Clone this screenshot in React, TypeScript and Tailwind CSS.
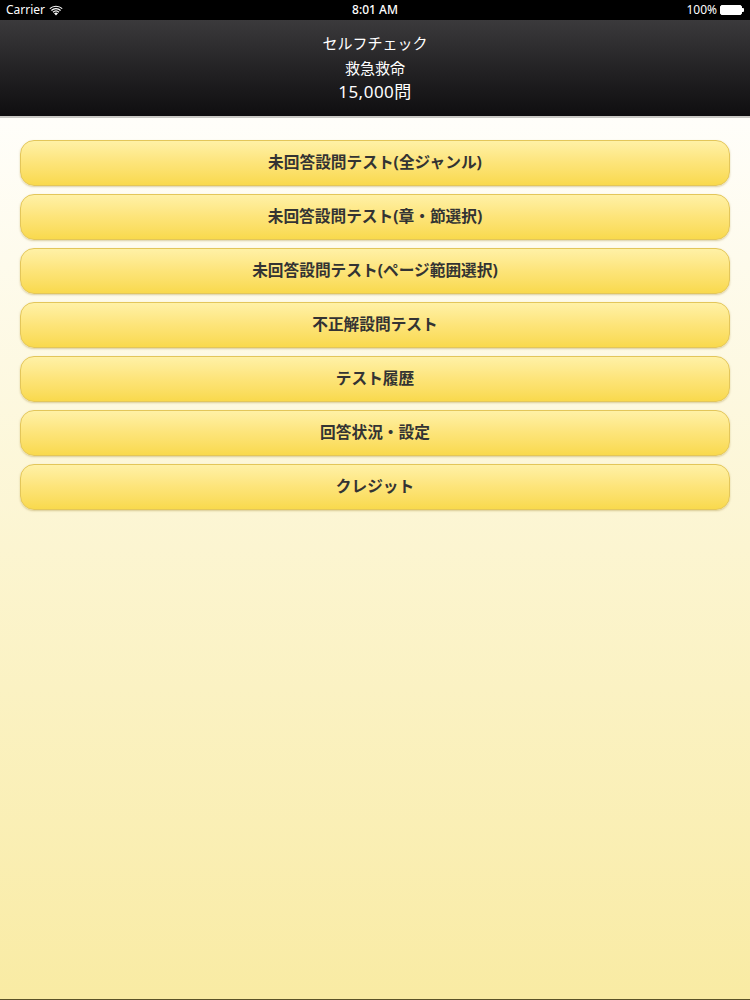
import React from 'react';

const menuItems = [
  '未回答設問テスト(全ジャンル)',
  '未回答設問テスト(章・節選択)',
  '未回答設問テスト(ページ範囲選択)',
  '不正解設問テスト',
  'テスト履歴',
  '回答状況・設定',
  'クレジット',
];

const font = "font-['Noto_Sans','Noto_Sans_CJK_JP',sans-serif]";

// Status bar
const StatusBar = () => (
  <div className="flex h-[20px] items-center justify-between bg-black px-[6px] text-[12px] text-white">
    <div className="flex w-[120px] items-center gap-[4px]">
      <span>Carrier</span>
      <svg width="14" height="11" viewBox="0 0 14 11" fill="white">
        <path d="M7 10.5 L5 8.3 A3 3 0 0 1 9 8.3 Z" />
        <path d="M3.6 6.8 A5 5 0 0 1 10.4 6.8 L9.6 7.7 A3.8 3.8 0 0 0 4.4 7.7 Z" />
        <path d="M2 5 A7.4 7.4 0 0 1 12 5 L11.2 5.9 A6.2 6.2 0 0 0 2.8 5.9 Z" />
        <path d="M0.4 3.2 A9.8 9.8 0 0 1 13.6 3.2 L12.8 4.1 A8.6 8.6 0 0 0 1.2 4.1 Z" />
      </svg>
    </div>
    <span className="font-medium">8:01 AM</span>
    <div className="flex w-[120px] items-center justify-end gap-[3px]">
      <span>100%</span>
      <div className="flex items-center">
        <div className="h-[10px] w-[22px] rounded-[2px] border border-white bg-white" />
        <div className="h-[4px] w-[2px] rounded-r-[1px] bg-white" />
      </div>
    </div>
  </div>
);

export default function App() {
  return (
    <div className={`flex h-[1000px] w-[750px] flex-col ${font}`}>
      <StatusBar />

      {/* Nav bar */}
      <div className="flex h-[96px] flex-col items-center justify-center bg-gradient-to-b from-[#3b3a3c] to-[#0f0e10] text-[15px] leading-[24.5px] text-white">
        <div>セルフチェック</div>
        <div>救急救命</div>
        <div className="text-[17px] tracking-[0.5px]">15,000問</div>
      </div>
      <div className="h-[2px] bg-[#c9c8c4]" />

      {/* Menu */}
      <div className="flex flex-1 flex-col gap-[8px] bg-gradient-to-b from-[#fffefa] to-[#f9eba3] px-[20px] pt-[22px]">
        {menuItems.map((item) => (
          <button
            key={item}
            className="flex h-[46px] items-center justify-center rounded-[14px] border border-[#e3c65a] bg-gradient-to-b from-[#fff1a6] via-[#fde479] to-[#f9d94c] text-[15.7px] font-bold text-[#333] shadow-[0_1px_2px_rgba(150,120,30,0.35)]"
          >
            {item}
          </button>
        ))}
      </div>
      <div className="h-[1px] bg-[#5a5228]" />
    </div>
  );
}
